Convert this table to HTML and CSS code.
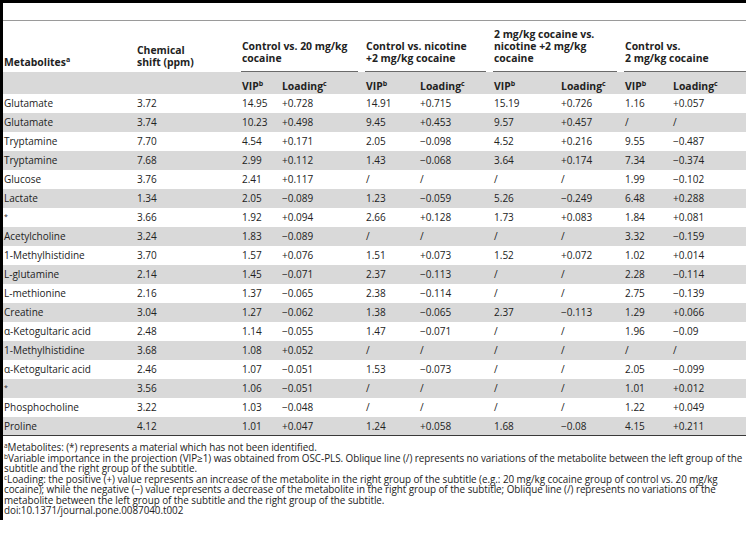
FILE: index.html
```html
<!DOCTYPE html>
<html lang="en">
<head>
    <meta charset="UTF-8">
    <meta name="viewport" content="width=device-width, initial-scale=1.0">
    <title>Table 2</title>
    <link rel="stylesheet" href="styles.css">
</head>
<body>
    <div class="page">
        <div class="caption"></div>

        <table class="data">
            <colgroup>
                <col style="width: 133px">
                <col style="width: 105px">
                <col style="width: 40px">
                <col style="width: 84px">
                <col style="width: 54px">
                <col style="width: 74px">
                <col style="width: 67px">
                <col style="width: 64px">
                <col style="width: 48px">
                <col style="width: 74px">
            </colgroup>
            <thead>
                <tr class="groups">
                    <th class="plain">Metabolites<sup>a</sup></th>
                    <th class="plain">Chemical<br>shift (ppm)</th>
                    <th colspan="2" class="group"><div>Control vs. 20 mg/kg<br>cocaine</div></th>
                    <th colspan="2" class="group"><div>Control vs. nicotine<br>+2 mg/kg cocaine</div></th>
                    <th colspan="2" class="group"><div>2 mg/kg cocaine vs.<br>nicotine +2 mg/kg<br>cocaine</div></th>
                    <th colspan="2" class="group last"><div>Control vs.<br>2 mg/kg cocaine</div></th>
                </tr>
                <tr class="sub">
                    <th></th>
                    <th></th>
                    <th>VIP<sup>b</sup></th>
                    <th>Loading<sup>c</sup></th>
                    <th>VIP<sup>b</sup></th>
                    <th>Loading<sup>c</sup></th>
                    <th>VIP<sup>b</sup></th>
                    <th>Loading<sup>c</sup></th>
                    <th>VIP<sup>b</sup></th>
                    <th>Loading<sup>c</sup></th>
                </tr>
            </thead>
            <tbody>
                <tr><td>Glutamate</td><td>3.72</td><td>14.95</td><td>+0.728</td><td>14.91</td><td>+0.715</td><td>15.19</td><td>+0.726</td><td>1.16</td><td>+0.057</td></tr>
                <tr><td>Glutamate</td><td>3.74</td><td>10.23</td><td>+0.498</td><td>9.45</td><td>+0.453</td><td>9.57</td><td>+0.457</td><td>/</td><td>/</td></tr>
                <tr><td>Tryptamine</td><td>7.70</td><td>4.54</td><td>+0.171</td><td>2.05</td><td>−0.098</td><td>4.52</td><td>+0.216</td><td>9.55</td><td>−0.487</td></tr>
                <tr><td>Tryptamine</td><td>7.68</td><td>2.99</td><td>+0.112</td><td>1.43</td><td>−0.068</td><td>3.64</td><td>+0.174</td><td>7.34</td><td>−0.374</td></tr>
                <tr><td>Glucose</td><td>3.76</td><td>2.41</td><td>+0.117</td><td>/</td><td>/</td><td>/</td><td>/</td><td>1.99</td><td>−0.102</td></tr>
                <tr><td>Lactate</td><td>1.34</td><td>2.05</td><td>−0.089</td><td>1.23</td><td>−0.059</td><td>5.26</td><td>−0.249</td><td>6.48</td><td>+0.288</td></tr>
                <tr><td><span class="star">*</span></td><td>3.66</td><td>1.92</td><td>+0.094</td><td>2.66</td><td>+0.128</td><td>1.73</td><td>+0.083</td><td>1.84</td><td>+0.081</td></tr>
                <tr><td>Acetylcholine</td><td>3.24</td><td>1.83</td><td>−0.089</td><td>/</td><td>/</td><td>/</td><td>/</td><td>3.32</td><td>−0.159</td></tr>
                <tr><td>1-Methylhistidine</td><td>3.70</td><td>1.57</td><td>+0.076</td><td>1.51</td><td>+0.073</td><td>1.52</td><td>+0.072</td><td>1.02</td><td>+0.014</td></tr>
                <tr><td>L-glutamine</td><td>2.14</td><td>1.45</td><td>−0.071</td><td>2.37</td><td>−0.113</td><td>/</td><td>/</td><td>2.28</td><td>−0.114</td></tr>
                <tr><td>L-methionine</td><td>2.16</td><td>1.37</td><td>−0.065</td><td>2.38</td><td>−0.114</td><td>/</td><td>/</td><td>2.75</td><td>−0.139</td></tr>
                <tr><td>Creatine</td><td>3.04</td><td>1.27</td><td>−0.062</td><td>1.38</td><td>−0.065</td><td>2.37</td><td>−0.113</td><td>1.29</td><td>+0.066</td></tr>
                <tr><td>α-Ketogultaric acid</td><td>2.48</td><td>1.14</td><td>−0.055</td><td>1.47</td><td>−0.071</td><td>/</td><td>/</td><td>1.96</td><td>−0.09</td></tr>
                <tr><td>1-Methylhistidine</td><td>3.68</td><td>1.08</td><td>+0.052</td><td>/</td><td>/</td><td>/</td><td>/</td><td>/</td><td>/</td></tr>
                <tr><td>α-Ketogultaric acid</td><td>2.46</td><td>1.07</td><td>−0.051</td><td>1.53</td><td>−0.073</td><td>/</td><td>/</td><td>2.05</td><td>−0.099</td></tr>
                <tr><td><span class="star">*</span></td><td>3.56</td><td>1.06</td><td>−0.051</td><td>/</td><td>/</td><td>/</td><td>/</td><td>1.01</td><td>+0.012</td></tr>
                <tr><td>Phosphocholine</td><td>3.22</td><td>1.03</td><td>−0.048</td><td>/</td><td>/</td><td>/</td><td>/</td><td>1.22</td><td>+0.049</td></tr>
                <tr><td>Proline</td><td>4.12</td><td>1.01</td><td>+0.047</td><td>1.24</td><td>+0.058</td><td>1.68</td><td>−0.08</td><td>4.15</td><td>+0.211</td></tr>
            </tbody>
        </table>

        <div class="notes">
            <p><sup>a</sup>Metabolites: (*) represents a material which has not been identified.</p>
            <p><sup>b</sup>Variable importance in the projection (VIP≥1) was obtained from OSC-PLS. Oblique line (/) represents no variations of the metabolite between the left group of the subtitle and the right group of the subtitle.</p>
            <p><sup>c</sup>Loading: the positive (+) value represents an increase of the metabolite in the right group of the subtitle (e.g.: 20 mg/kg cocaine group of control vs. 20 mg/kg cocaine); while the negative (−) value represents a decrease of the metabolite in the right group of the subtitle; Oblique line (/) represents no variations of the metabolite between the left group of the subtitle and the right group of the subtitle.</p>
            <p>doi:10.1371/journal.pone.0087040.t002</p>
        </div>
    </div>
</body>
</html>
```

FILE: styles.css
```css
body {
    margin: 0;
    padding: 0;
    background: #fff;
    color: #222;
    font-family: 'Open Sans', 'Liberation Sans', sans-serif;
    font-size: 10px;
}

.page {
    border-top: 3px solid #000;
    border-left: 3px solid #000;
    padding-bottom: 4px;
}

.caption {
    height: 17px;
}

.data {
    width: 743px;
    table-layout: fixed;
    border-collapse: collapse;
    border-top: 1px solid #9a9a9a;
    border-bottom: 1px solid #3a3a3a;
}

.data th,
.data td {
    padding: 0 0 0 1px;
    text-align: left;
    white-space: nowrap;
}

.data th {
    font-weight: bold;
    font-size: 10.4px;
    line-height: 12px;
}

/* first header row: labels sit on the bottom */
.groups {
    height: 51px;
}

.groups th {
    vertical-align: bottom;
}

.groups .plain {
    padding-bottom: 4px;
}

.groups .group {
    padding: 0 7px 0 0;
}

.groups .group.last {
    padding-right: 0;
}

.groups .group div {
    border-bottom: 1px solid #6a6a6a;
    padding: 0 0 7px 1px;
}

.sub {
    height: 22px;
}

.sub th {
    background: #d9d9d9;
    vertical-align: bottom;
    padding-bottom: 2px;
}

.data tbody tr {
    height: 19px;
}

.data td {
    line-height: 12px;
    vertical-align: middle;
}

.data tbody tr:nth-child(even) td {
    background: #d9d9d9;
}

sup {
    font-size: 7px;
    line-height: 0;
    vertical-align: 4px;
}

.star {
    font-size: 7px;
    vertical-align: 2px;
}

.notes {
    padding: 6px 0 0 1px;
    font-size: 9.9px;
    line-height: 10.5px;
    letter-spacing: -0.05px;
}

.notes p {
    margin: 0;
}

.notes sup {
    font-size: 6.5px;
    vertical-align: 3px;
}
```
